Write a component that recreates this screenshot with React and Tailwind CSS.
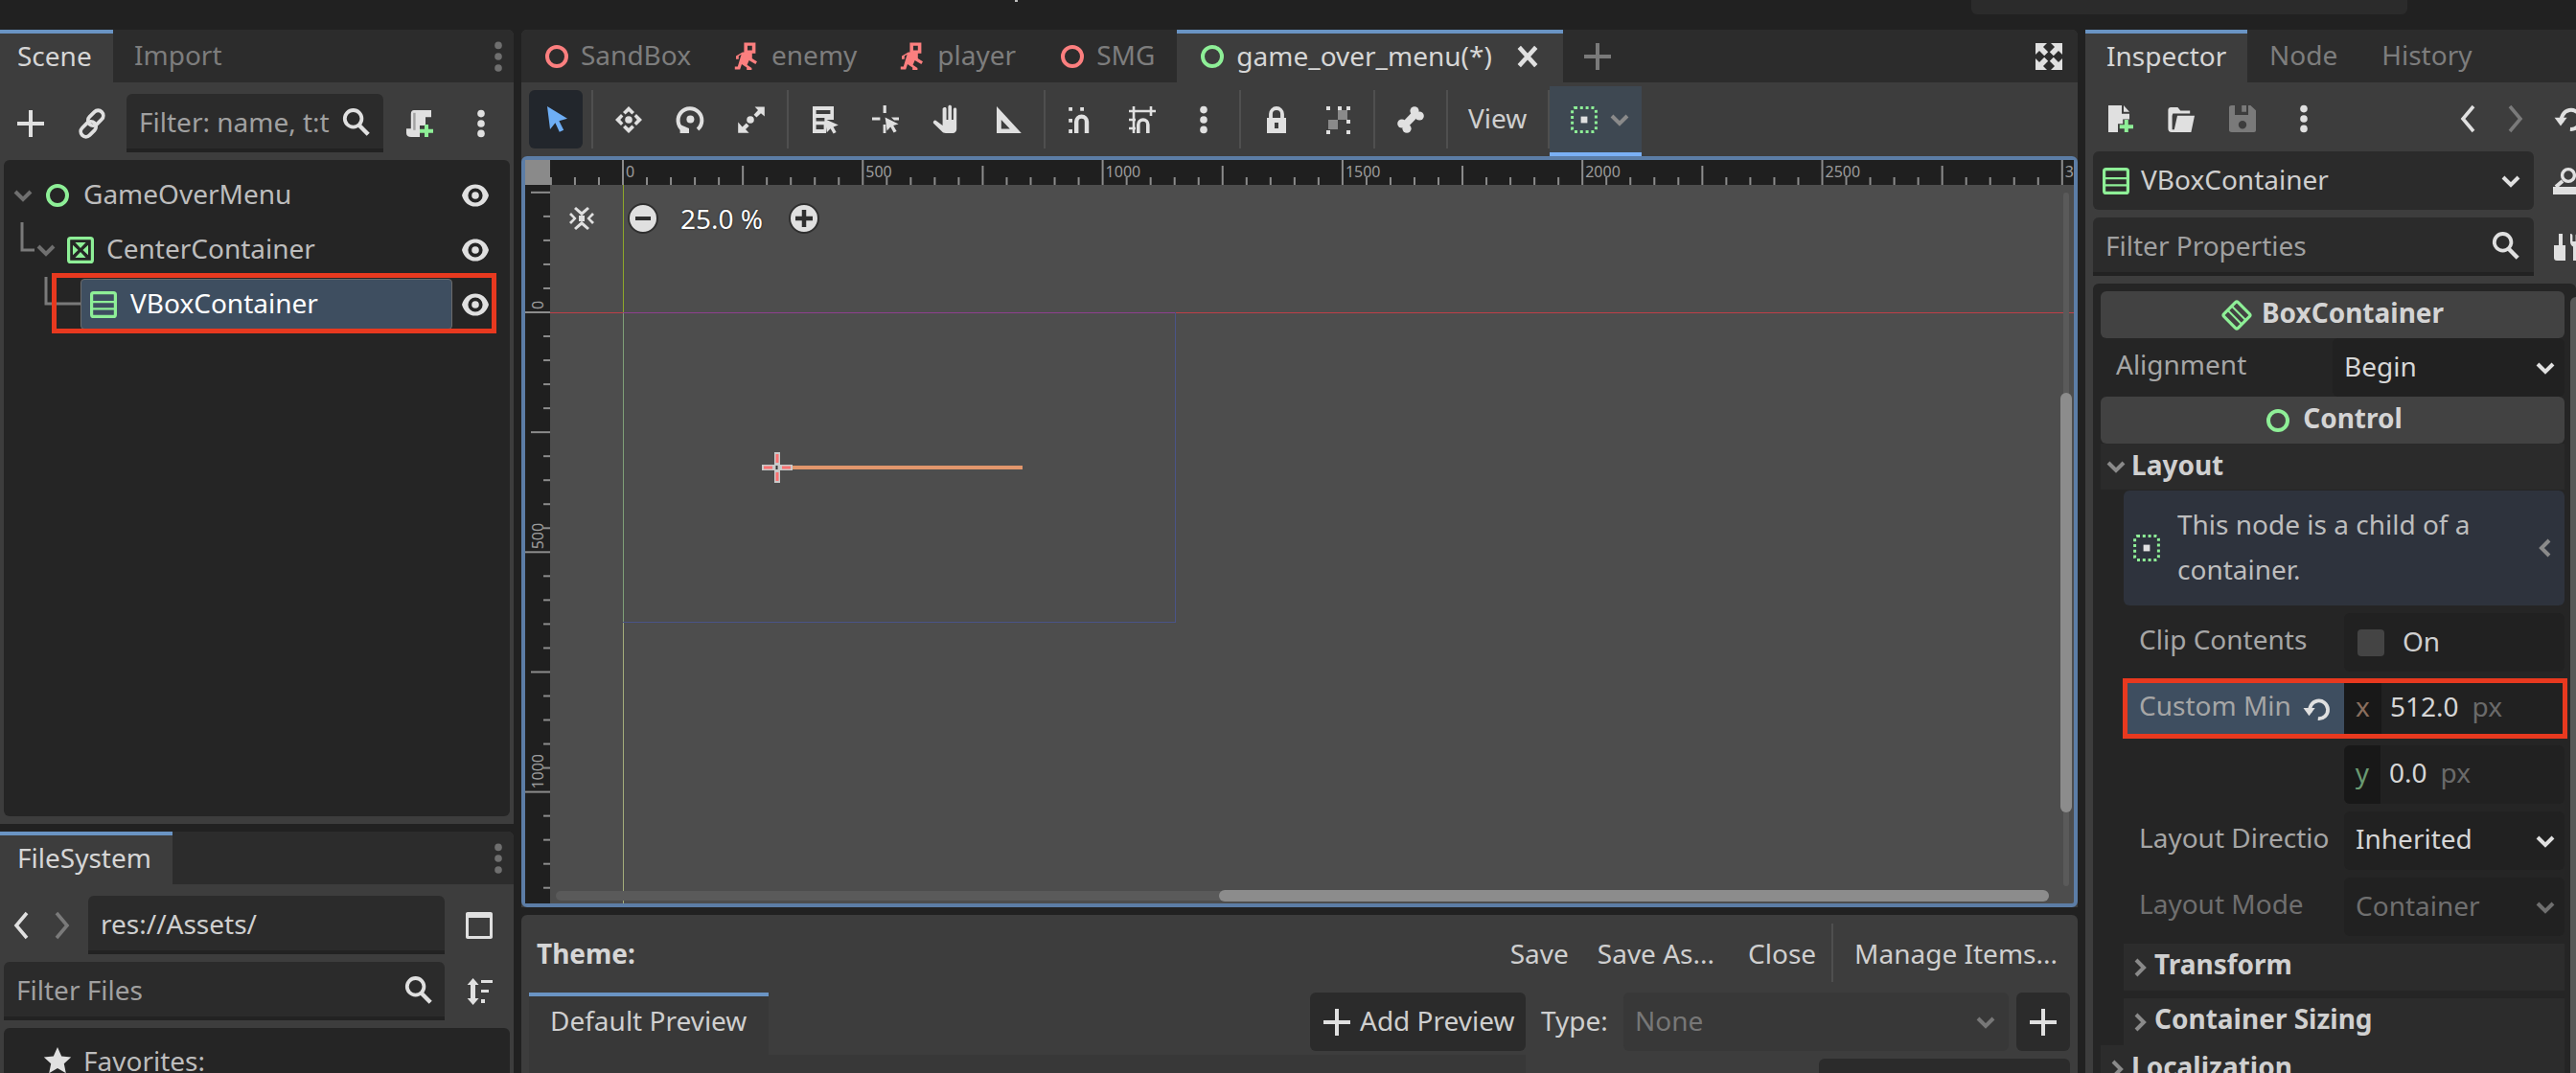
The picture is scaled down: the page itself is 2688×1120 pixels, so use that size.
import React from 'react';

const GREEN = '#8eef97';
const RED = '#fc7f7f';
const LIGHT = '#e0e0e0';

const Ico = ({ size = 32, className = '', children }) => (
  <svg viewBox="0 0 16 16" width={size} height={size} className={`shrink-0 ${className}`}>{children}</svg>
);

const Plus = ({ color = LIGHT }) => (
  <Ico><path d="M7 1h2v6h6v2H9v6H7V9H1V7h6z" fill={color} /></Ico>
);
const Dots = ({ color = LIGHT }) => (
  <Ico><g fill={color}><circle cx="8" cy="2.8" r="1.9" /><circle cx="8" cy="8" r="1.9" /><circle cx="8" cy="13.2" r="1.9" /></g></Ico>
);
const SmallDots = () => (
  <Ico><g fill="#6f6f6f"><circle cx="8" cy="2.2" r="1.9" /><circle cx="8" cy="8" r="1.9" /><circle cx="8" cy="14" r="1.9" /></g></Ico>
);
const Search = () => (
  <Ico><g fill="none" stroke={LIGHT}><circle cx="6.8" cy="6.4" r="4.4" strokeWidth="1.9" /><path d="M10 10l4.6 4.6" strokeWidth="2.2" /></g></Ico>
);
const Eye = () => (
  <Ico>
    <path fillRule="evenodd" fill={LIGHT} d="M8 2.2C4.6 2.2 2 4.4 1 8c1 3.6 3.6 5.8 7 5.8s6-2.2 7-5.8c-1-3.6-3.6-5.8-7-5.8zM8 4.2a3.8 3.8 0 1 1 0 7.6 3.8 3.8 0 0 1 0-7.6z" />
    <circle cx="8" cy="8" r="1.9" fill={LIGHT} />
  </Ico>
);
const Ring = ({ color = GREEN, size = 32 }) => (
  <Ico size={size}><circle cx="8" cy="8" r="5" fill="none" stroke={color} strokeWidth="2" /></Ico>
);
const VBox = () => (
  <Ico>
    <rect x="1.8" y="1.8" width="12.4" height="12.4" rx="1" fill="none" stroke={GREEN} strokeWidth="1.6" />
    <path d="M2 6h12v1.1H2zM2 9.6h12v1.1H2z" fill={GREEN} />
  </Ico>
);
const CenterBox = () => (
  <Ico>
    <rect x="1.8" y="1.8" width="12.4" height="12.4" rx="1" fill="none" stroke={GREEN} strokeWidth="1.6" />
    <path d="M5.2 4h5.6L8 7zM5.2 12h5.6L8 9zM4 5.4v5.2L6.8 8zM12 5.4v5.2L9.2 8z" fill={GREEN} />
  </Ico>
);
const Chevron = ({ color = '#8a8a8a', size = 24, dir = 'down' }) => (
  <svg viewBox="0 0 12 12" width={size} height={size} className="shrink-0">
    <path d={dir === 'down' ? 'M2 4l4 4 4-4' : dir === 'right' ? 'M4 2l4 4-4 4' : 'M8 2L4 6l4 4'} fill="none" stroke={color} strokeWidth="2" />
  </svg>
);
const Angle = ({ dir = 'left', color = LIGHT }) => (
  <Ico>
    <path d={dir === 'left' ? 'M10.5 1.5L5 8l5.5 6.5' : 'M5.5 1.5L11 8l-5.5 6.5'} fill="none" stroke={color} strokeWidth="1.8" />
  </Ico>
);
const Runner = () => (
  <Ico>
    <path fillRule="evenodd" fill={RED} d="M6.2 0.8h6v5.6h-1.8v2.6l2.6 1.6-.8 1.4-3.4-2-1 2.4 2.4 1.6V15H7.6v-1.2L5 12l-.9 2.8H1.4v-1.5h1.5l1.9-6.4-1.4.8v1.7H2V7.8l3.4-2h.8zM8 2.4v2.4h2.4V2.4z" />
  </Ico>
);
const Cross = ({ color = LIGHT }) => (
  <Ico size={28}><path d="M3 2.5L13 13.5M13 2.5L3 13.5" stroke={color} strokeWidth="2.6" fill="none" /></Ico>
);
const LinkIco = () => (
  <Ico>
    <g fill="none" stroke={LIGHT} strokeWidth="1.9">
      <rect x="7.2" y="0.6" width="5.4" height="9" rx="2.7" transform="rotate(45 9.9 5.1)" />
      <rect x="3.4" y="6.4" width="5.4" height="9" rx="2.7" transform="rotate(45 6.1 10.9)" />
    </g>
  </Ico>
);
const ScriptAdd = () => (
  <Ico>
    <path fill={LIGHT} d="M5 1h9v3.6h-3V9H8v6H3.5C2 15 1 14.2 1 13v-2.4h2.4V3C3.4 1.8 4 1 5 1z" />
    <path fill="#2f2f2f" d="M4.6 2.4h1.2v9H4.6z" opacity=".35" />
    <path fill={GREEN} d="M10.5 8.5h2v2.4H15v2h-2.5V15h-2v-2.1H8v-2h2.5z" />
  </Ico>
);
const NewFile = () => (
  <Ico>
    <path fill={LIGHT} d="M2 1h7v4.4h4V8.2H9.6v2.4H7V15H2zM10 1l3 3.4h-3z" />
    <path fill={GREEN} d="M10.4 8.5h2v2.6H15v2h-2.6V15h-2v-1.9H7.9v-2h2.5z" />
  </Ico>
);
const OpenFolder = () => (
  <Ico>
    <path fill={LIGHT} d="M2.6 2h3.6l1.4 1.8h5v1.4h-9C3.8 5.2 3.4 5.8 3.3 6.6v7H4.4L6 6.4h9L13.2 15H3C1.8 15 1.2 14.2 1.2 13V3.4C1.2 2.6 1.8 2 2.6 2z" />
  </Ico>
);
const SaveIco = () => (
  <Ico>
    <path fillRule="evenodd" fill="#7a7a7a" d="M2.4 1H4v5h7V1h1.2L15 3.6V14c0 .6-.4 1-1 1H2.4c-.8 0-1.4-.4-1.4-1V2c0-.6.6-1 1.4-1zM8 9a2.1 2.1 0 1 0 0 4.2A2.1 2.1 0 0 0 8 9zM7.6 1H10v3.4H7.6z" />
  </Ico>
);
const Reload = ({ color = LIGHT, size = 32 }) => (
  <Ico size={size}>
    <path d="M4.4 9.5A5 5 0 1 1 8 13.5" fill="none" stroke={color} strokeWidth="2" transform="rotate(-10 8 8)" />
    <path d="M0.8 7.4h6.5L4 11.8z" fill={color} />
  </Ico>
);
const DottedBox = ({ size = 32 }) => (
  <Ico size={size}>
    <rect x="1.8" y="1.8" width="12.4" height="12.4" rx="1.2" fill="none" stroke={GREEN} strokeWidth="1.5" strokeDasharray="1.5 1.4" />
    <rect x="6.3" y="6.3" width="3.4" height="3.4" fill={LIGHT} />
  </Ico>
);

// canvas toolbar drawings
const toolIcons = {
  select: <path fill="#6eaef5" d="M3.5 1L14 7.4l-4.3 1.2 2.4 4.8-2.2 1-2.2-4.8L5 13z" />,
  move: (
    <g fill={LIGHT}>
      <path d="M8 1l3 3-1.3 1.2L8 3.6 6.3 5.2 5 4zM8 15l3-3-1.3-1.2L8 12.4l-1.7-1.6L5 12zM1 8l3-3 1.2 1.3L3.6 8l1.6 1.7L4 11zM15 8l-3-3-1.2 1.3L12.4 8l-1.6 1.7L12 11z" />
      <circle cx="8" cy="8" r="1.9" />
    </g>
  ),
  rotate: (
    <g>
      <path d="M4.2 13.2A6.2 6.2 0 1 1 12 13" fill="none" stroke={LIGHT} strokeWidth="2" strokeLinecap="butt" />
      <path d="M2.8 15V10.5L7.5 12.5V15z" fill={LIGHT} />
      <circle cx="8.2" cy="7.8" r="2" fill={LIGHT} />
    </g>
  ),
  scale: (
    <g fill={LIGHT}>
      <path d="M9.8 1.2h5.1v5.1L13 4.600l-2.300 2.200-1.400-1.400L11.500 3z" />
      <path d="M1.100 9.200V14.900h5.700L5 13l1.800-1.700-1.400-1.500L3.300 11.800z" />
      <circle cx="7.500" cy="8" r="1.900" />
    </g>
  ),
  list: (
    <g fill={LIGHT}>
      <path fillRule="evenodd" d="M2 1h11v7H9v7H2zM3.800 3v2h7.400V3zM3.800 7v1.800h4.400V7zM3.800 10.600v2.400h4v-2.400z" />
      <path d="M8.400 7.600l7 3.200-2.600 1 1.500 2.700-1.500.8-1.500-2.700-1.900 2z" />
    </g>
  ),
  pivot: (
    <g fill={LIGHT}>
      <path d="M6.800 0.500h1.600v4H6.800zM1 6.800h4.200v1.500H1zM6.800 10.500h1.400V15H6.800zM11 6.800h4v1.500h-2.500z" />
      <path d="M7.800 6.800l7 3.400-2.700.8 1.700 3-1.500.8-1.700-3-1.800 2z" />
    </g>
  ),
  pan: <path fill={LIGHT} d="M7 1.500c.5 0 .8.3.8.8V8h.9V1.200c0-.5.4-.8.9-.8s.9.300.9.800V8h.9V2.500c0-.5.4-.8.9-.8s.8.300.8.800V13c0 1.100-.9 2-2 2H7.500c-1 0-1.700-.4-2.300-1.100L1.200 10c-.4-.4-.4-1 0-1.400s1-.4 1.400 0l3.200 2.400V2.300c0-.5.700-.8 1.200-.8z" />,
  ruler: <path fillRule="evenodd" fill={LIGHT} d="M2 1l12.900 14H2zM4.400 8v4.700h4.500z" />,
  snap: (
    <g fill={LIGHT}>
      <path d="M4.500 15V9a3.800 3.800 0 0 1 7.600 0v6h-2.200V9a1.600 1.600 0 0 0-3.200 0v6z" />
      <path d="M1.600 1.500h1.900v1.900H1.600zM7.600 1.500h1.900v1.900H7.600zM1.600 7.500h1.900v1.900H1.600zM1.600 13h1.900v2H1.600z" />
    </g>
  ),
  grid: (
    <g>
      <path d="M3.500 1v14M12.500 1v5M1 3.500h14M1 8h3.500M1 12.500h3.500" stroke={LIGHT} strokeWidth="1.300" />
      <path d="M5 15V10.500a3.400 3.400 0 0 1 6.800 0V15H10v-4.500a1.300 1.300 0 0 0-3.200 0V15z" fill={LIGHT} />
    </g>
  ),
  lock: (
    <g>
      <path fillRule="evenodd" fill={LIGHT} d="M3 7h10v8H3zM7 9.500V12.500h2V9.500z" />
      <path d="M5 7.500V5a3 3 0 0 1 6 0v2.500" fill="none" stroke={LIGHT} strokeWidth="1.900" />
    </g>
  ),
  group: (
    <g>
      <path d="M8 3h5v5H8v5H3V8h5z" fill="#8a8a8a" />
      <path d="M2 1h2v2H2zM8 1h2v2H8zM12.500 1h2v2h-2zM2 13.500h2v2H2zM12.500 13.500h2v2h-2zM12.500 8h2v2h-2z" fill={LIGHT} />
    </g>
  ),
  bone: (
    <g fill={LIGHT}>
      <path d="M10.500 5L5 10.700" stroke={LIGHT} strokeWidth="3.800" />
      <circle cx="10" cy="3.400" r="2.300" />
      <circle cx="12.600" cy="6" r="2.300" />
      <circle cx="3.400" cy="10" r="2.300" />
      <circle cx="6" cy="12.600" r="2.300" />
    </g>
  ),
};

const ToolBtn = ({ icon }) => (
  <div className="flex h-[61px] w-[64px] items-center justify-center"><Ico>{toolIcons[icon]}</Ico></div>
);
const ToolSep = () => (
  <div className="flex h-[61px] w-[12px] justify-center"><div className="h-full w-[2px] bg-[#4f4f4f]" /></div>
);

const SceneTab = ({ icon, label }) => (
  <div className="flex h-full items-center pl-[21px] pr-[22px] text-[#7d7d7d]">
    {icon}
    <span className="ml-[9px] pb-[3px]">{label}</span>
  </div>
);

const DockTab = ({ label, active, className = '' }) => (
  <div className={`flex h-full items-center ${className} ${active ? 'border-t-4 border-[#6a94c4] bg-[#3d3d3d] pb-[6px] text-[#d6d6d6]' : 'pb-[3px] text-[#7d7d7d]'}`}>
    {label}
  </div>
);

const InputBox = ({ className = '', children }) => (
  <div className={`flex h-[61px] items-center rounded-t-[6px] border-b-4 border-[#222222] bg-[#2b2b2b] ${className}`}>{children}</div>
);

const Ruler = ({ vertical }) => {
  const ticks = [];
  if (vertical) {
    for (let i = -5; i <= 24; i++) {
      const y = 133 + i * 25.03;
      const len = i % 10 === 0 ? 26 : i % 5 === 0 ? 20 : 7;
      ticks.push(<rect key={i} x={26 - len} y={y - 1} width={len} height="2" fill="#8c8c8c" />);
      if (i % 10 === 0) {
        const v = i * 50;
        ticks.push(
          <text key={`t${i}`} x="19" y={y - 3} fontSize="16" fill="#9c9c9c" fontFamily="Noto Sans" transform={`rotate(-90 19 ${y - 3})`}>{v}</text>
        );
      }
    }
    return <svg width="26" height="750" className="shrink-0">{ticks}</svg>;
  }
  for (let i = -3; i <= 60; i++) {
    const x = 76 + i * 25.03;
    const len = i % 10 === 0 ? 26 : i % 5 === 0 ? 20 : 8;
    ticks.push(<rect key={i} x={x - 1} y={26 - len} width="2" height={len} fill="#8c8c8c" />);
    if (i % 10 === 0) {
      ticks.push(<text key={`t${i}`} x={x + 3} y="18" fontSize="16" fill="#9c9c9c" fontFamily="Noto Sans">{i * 50}</text>);
    }
  }
  return <svg width="1590" height="26" className="shrink-0">{ticks}</svg>;
};

const PropRow = ({ label, dim, children }) => (
  <div className="ml-[24px] mt-[8px] flex h-[61px]">
    <div className={`flex w-[230px] items-center pb-[8px] pl-[16px] ${dim ? 'text-[#6f6f6f]' : 'text-[#a6a6a6]'}`}>{label}</div>
    {children}
  </div>
);
const ValueBox = ({ className = '', children }) => (
  <div className={`flex h-full w-[230px] items-center rounded-[6px] bg-[#212121] ${className}`}>{children}</div>
);
const Section = ({ label }) => (
  <div className="ml-[24px] mt-[8px] flex h-[49px] items-center bg-[#2c2c2c] pl-[5px] font-bold text-[#d0d0d0]">
    <Chevron dir="right" size={24} />
    <span className="ml-[3px] pb-[7px]">{label}</span>
  </div>
);
const ClassHeader = ({ icon, label }) => (
  <div className="flex h-[49px] items-center justify-center rounded-[6px] bg-[#424242] font-bold text-[#d4d4d4]">
    {icon}
    <span className="ml-[10px] pb-[5px]">{label}</span>
  </div>
);

export default function App() {
  return (
    <div className="flex h-[1120px] w-[2688px] flex-col overflow-hidden bg-[#212121] font-['Noto_Sans',sans-serif] text-[28px] leading-none text-[#cfcfcf]">
      {/* top bar */}
      <div className="flex h-[31px] shrink-0 items-start">
        <div className="ml-[1059px] h-[2px] w-[3px] bg-[#bdbdbd]" />
        <div className="ml-[995px] h-[15px] w-[455px] rounded-b-[6px] bg-[#2b2b2b]" />
      </div>

      <div className="flex min-h-0 flex-1 gap-[8px]">
        {/* left docks */}
        <div className="flex w-[536px] shrink-0 flex-col gap-[8px]">
          <div className="flex h-[829px] flex-col rounded-tr-[6px] bg-[#3d3d3d]">
            <div className="flex h-[55px] shrink-0 items-center justify-between rounded-tr-[6px] bg-[#2c2c2c]">
              <div className="flex h-full items-center">
                <DockTab label="Scene" active className="w-[118px] pl-[18px]" />
                <DockTab label="Import" className="pl-[22px]" />
              </div>
              <SmallDots />
            </div>
            <div className="box-content flex h-[61px] shrink-0 items-center pt-[12px]">
              <div className="flex w-[64px] justify-center"><Plus /></div>
              <div className="flex w-[64px] justify-center"><LinkIco /></div>
              <InputBox className="ml-[4px] w-[268px] pl-[13px] pr-[13px] text-[#a0a0a0]">
                <span className="flex-1 whitespace-nowrap">Filter: name, t:t</span>
                <Search />
              </InputBox>
              <div className="ml-[6px] flex w-[64px] justify-center"><ScriptAdd /></div>
              <div className="flex w-[64px] justify-center"><Dots /></div>
            </div>
            <div className="relative mx-[4px] mb-[8px] mt-[8px] min-h-0 flex-1 rounded-[6px] bg-[#252525] pt-[8px]">
              <div className="flex h-[57px] items-center">
                <div className="ml-[8px] flex w-[24px] justify-center"><Chevron color="#6f6f6f" /></div>
                <div className="ml-[8px]"><Ring /></div>
                <span className="ml-[11px] pb-[3px] text-[#bdbdbd]">GameOverMenu</span>
              </div>
              <div className="flex h-[57px] items-center">
                <svg width="15" height="57" className="ml-[17px] shrink-0">
                  <path d="M2 0v29h13" fill="none" stroke="#7a7a7a" strokeWidth="3" />
                </svg>
                <Chevron color="#6f6f6f" />
                <div className="ml-[8px]"><CenterBox /></div>
                <span className="ml-[11px] pb-[3px] text-[#bdbdbd]">CenterContainer</span>
              </div>
              <div className="flex h-[57px] items-center">
                <svg width="46" height="57" className="ml-[42px] shrink-0">
                  <path d="M2 0v28h38" fill="none" stroke="#7a7a7a" strokeWidth="3" />
                </svg>
                <div className="-ml-[8px] flex h-[53px] w-[388px] items-center rounded-[4px] border border-[#6b6b6b] bg-[#3e4e60] pl-[7px] text-white">
                  <VBox />
                  <span className="ml-[12px] pb-[3px]">VBoxContainer</span>
                </div>
              </div>
              {/* visibility toggles */}
              <div className="absolute left-[476px] top-[8px] flex flex-col">
                {[0, 1, 2].map((i) => (
                  <div key={i} className="flex h-[57px] items-center"><Eye /></div>
                ))}
              </div>
              {/* red annotation box */}
              <div className="absolute left-[50px] top-[118px] h-[63px] w-[464px] border-[5px] border-[#e8391f]" />
            </div>
          </div>

          <div className="flex min-h-0 flex-1 flex-col rounded-tr-[6px] bg-[#3d3d3d]">
            <div className="flex h-[55px] shrink-0 items-center justify-between rounded-tr-[6px] bg-[#2c2c2c]">
              <DockTab label="FileSystem" active className="w-[180px] pl-[18px]" />
              <SmallDots />
            </div>
            <div className="mt-[12px] flex h-[61px] shrink-0 items-center">
              <div className="flex w-[46px] justify-center"><Angle dir="left" /></div>
              <div className="flex w-[36px] justify-center"><Angle dir="right" color="#7a7a7a" /></div>
              <InputBox className="ml-[10px] w-[372px] pl-[13px]">res://Assets/</InputBox>
              <div className="ml-[20px] flex w-[32px] justify-center">
                <Ico>
                  <path fillRule="evenodd" fill={LIGHT} d="M2 1h12c.6 0 1 .4 1 1v12c0 .6-.4 1-1 1H2c-.6 0-1-.4-1-1V2c0-.6.4-1 1-1zM2.500 4v9.500h11V4z" />
                </Ico>
              </div>
            </div>
            <div className="mt-[8px] flex h-[61px] shrink-0 items-center pl-[4px]">
              <InputBox className="w-[460px] pl-[13px] pr-[12px] text-[#a0a0a0]">
                <span className="flex-1">Filter Files</span>
                <Search />
              </InputBox>
              <div className="ml-[20px] flex w-[32px] justify-center">
                <Ico>
                  <g fill={LIGHT}>
                    <path d="M4.800 1l3 3.500H6v7h1.800L4.800 15l-3-3.500h1.700v-7H1.800z" />
                    <path d="M9 2h6v1.500H9zM9 7h4v1.500H9zM9 12h2v2H9z" />
                  </g>
                </Ico>
              </div>
            </div>
            <div className="mx-[4px] mt-[8px] min-h-0 flex-1 rounded-t-[6px] bg-[#252525]">
              <div className="box-content flex h-[60px] items-center pl-[40px] pt-[4px] text-[#bdbdbd]">
                <Ico><path fill={LIGHT} d="M8 1l2.100 4.700 5 .5-3.700 3.400 1 5-4.400-2.600-4.400 2.600 1-5L.9 6.200l5-.5z" /></Ico>
                <span className="ml-[11px]">Favorites:</span>
              </div>
            </div>
          </div>
        </div>

        {/* center column */}
        <div className="flex w-[1624px] shrink-0 flex-col gap-[8px]">
          <div className="flex h-[916px] flex-col rounded-t-[6px] bg-[#3d3d3d]">
            <div className="flex h-[55px] shrink-0 items-center rounded-t-[6px] bg-[#2c2c2c]">
              <SceneTab icon={<Ring color={RED} />} label="SandBox" />
              <SceneTab icon={<Runner />} label="enemy" />
              <SceneTab icon={<Runner />} label="player" />
              <SceneTab icon={<Ring color={RED} />} label="SMG" />
              <div className="ml-[1px] flex h-full w-[403px] items-center border-t-4 border-[#6a94c4] bg-[#3d3d3d] pb-[4px] pl-[21px] text-[#d6d6d6]">
                <Ring />
                <span className="ml-[9px] whitespace-nowrap pb-[2px]">game_over_menu(*)</span>
                <div className="ml-[23px]"><Cross /></div>
              </div>
              <div className="ml-[20px]"><Plus color="#7a7a7a" /></div>
              <div className="ml-auto mr-[14px]">
                <Ico>
                  <path fill={LIGHT} d="M1 1h6L5 3l2.600 2.600L5.600 7.600 3 5 1 7zM15 1H9l2 2-2.600 2.600 2 2L13 5l2 2zM1 15h6l-2-2 2.600-2.600-2-2L3 11l-2-2zM15 15H9l2-2-2.600-2.600 2-2L13 11l2-2z" />
                </Ico>
              </div>
            </div>

            <div className="flex h-[77px] shrink-0 items-start pl-[4px] pt-[8px]">
              <div className="flex h-[61px] w-[64px] items-center justify-center">
                <div className="flex h-[61px] w-[56px] items-center justify-center rounded-[6px] bg-[#22262c]">
                  <Ico>{toolIcons.select}</Ico>
                </div>
              </div>
              <ToolSep />
              <ToolBtn icon="move" /><ToolBtn icon="rotate" /><ToolBtn icon="scale" />
              <ToolSep />
              <ToolBtn icon="list" /><ToolBtn icon="pivot" /><ToolBtn icon="pan" /><ToolBtn icon="ruler" />
              <ToolSep />
              <ToolBtn icon="snap" /><ToolBtn icon="grid" />
              <div className="flex h-[61px] w-[64px] items-center justify-center"><Dots /></div>
              <ToolSep />
              <ToolBtn icon="lock" /><ToolBtn icon="group" />
              <ToolSep />
              <ToolBtn icon="bone" />
              <ToolSep />
              <div className="flex h-[61px] w-[99px] items-center pb-[4px] pl-[16px] text-[#cfcfcf]">View</div>
              <div className="h-[61px] w-[2px] bg-[#4f4f4f]" />
              <div className="-mt-[4px] flex h-[73px] w-[96px] items-center border-b-4 border-[#7ab0f5] bg-[#3e4852] pl-[20px]">
                <DottedBox />
                <div className="ml-[9px]"><Chevron size={24} /></div>
              </div>
            </div>

            {/* viewport */}
            <div className="flex min-h-0 flex-1 flex-col rounded-[6px] border-4 border-[#5c7da6] bg-[#4d4d4d]">
              <div className="flex h-[26px] shrink-0 overflow-hidden bg-[#1f1f1f]">
                <div className="h-[26px] w-[26px] shrink-0 bg-[#8a8a8a]" />
                <Ruler />
              </div>
              <div className="flex min-h-0 flex-1">
                <div className="w-[26px] shrink-0 overflow-hidden bg-[#1f1f1f]"><Ruler vertical /></div>
                <div className="relative min-w-0 flex-1 overflow-hidden">
                  <div className="absolute left-0 right-0 top-[133px] h-[1px] bg-[#bf3f48]" />
                  <div className="absolute left-[76px] top-0 h-[133px] w-[1px] bg-[#8ea82a]" />
                  <div className="absolute left-[76px] top-[133px] h-[324px] w-[1px] bg-[#7f9f77]" />
                  <div className="absolute bottom-0 left-[76px] top-[457px] w-[1px] bg-[#a3ad7a]" />
                  <div className="absolute left-[76px] top-[133px] h-[1px] w-[576px] bg-[#8f3f8f]" />
                  <div className="absolute left-[76px] top-[133px] h-[324px] w-[577px] border-b border-r border-[#4a5488]" />

                  {/* zoom widget */}
                  <div className="absolute left-[17px] top-[19px] flex items-center">
                    <Ico>
                      <path fill={LIGHT} d="M5 2l3 2.500L11 2l1 1-4 3.600L4 3zM2.500 5l2.800 3-2.800 3-1-1L3.600 8 1.500 6zM13.500 5l1 1-2.100 2 2.100 2-1 1-2.800-3zM5 14l3-2.500 3 2.500 1-1-4-3.600L4 13zM6.500 6.500h3v3h-3z" />
                    </Ico>
                    <div className="ml-[32px] flex h-[32px] w-[32px] items-center justify-center rounded-full border-2 border-[#2f2f2f] bg-[#e0e0e0]">
                      <div className="h-[4px] w-[16px] bg-[#2f2f2f]" />
                    </div>
                    <span className="ml-[23px] w-[101px] text-white [text-shadow:0_0_2px_#000]">25.0 %</span>
                    <div className="ml-[12px] flex h-[32px] w-[32px] items-center justify-center rounded-full border-2 border-[#2f2f2f] bg-[#e0e0e0]">
                      <svg viewBox="0 0 16 16" width="18" height="18"><path d="M6 0h4v6h6v4h-6v6H6v-6H0V6h6z" fill="#2f2f2f" /></svg>
                    </div>
                  </div>

                  {/* selected node */}
                  <div className="absolute left-[252px] top-[293px] h-[4px] w-[241px] bg-[#e2966c]" />
                  <svg className="absolute left-[221px] top-[279px]" width="32" height="32">
                    <path d="M13 0h6v13h13v6H19v13h-6V19H0v-6h13z" fill="#c9c9c9" />
                    <path d="M14.500 2h3v9h-3zM14.500 21h3v9h-3zM2 14.500h9v3H2zM21 14.500h9v3h-9z" fill="#f97070" />
                    <rect x="14.500" y="14" width="2" height="4" fill="#333" />
                  </svg>

                  {/* scrollbars */}
                  <div className="absolute bottom-[18px] right-[5px] top-[8px] w-[6px] rounded-full bg-[#5a5a5a]" />
                  <div className="absolute right-[2px] top-[217px] h-[438px] w-[12px] rounded-full bg-[#8c8c8c]" />
                  <div className="absolute bottom-[3px] left-[6px] right-[26px] h-[10px] rounded-full bg-[#5a5a5a]" />
                  <div className="absolute bottom-[2px] right-[26px] h-[12px] w-[866px] rounded-full bg-[#8c8c8c]" />
                </div>
              </div>
            </div>
          </div>

          {/* theme editor */}
          <div className="flex min-h-0 flex-1 flex-col rounded-t-[6px] bg-[#3d3d3d]">
            <div className="flex h-[81px] shrink-0 items-center pb-[2px] pl-[16px] pr-[21px]">
              <span className="font-bold text-[#d6d6d6]">Theme:</span>
              <span className="ml-auto">Save</span>
              <span className="ml-[30px]">Save As...</span>
              <span className="ml-[35px]">Close</span>
              <div className="ml-[16px] mr-[22px] h-[61px] w-[2px] bg-[#4f4f4f]" />
              <span>Manage Items...</span>
            </div>
            <div className="flex h-[65px] shrink-0 items-start pl-[8px]">
              <div className="flex h-[65px] w-[250px] items-center whitespace-nowrap border-t-4 border-[#6a94c4] bg-[#383838] pb-[12px] pl-[22px]">Default Preview</div>
              <div className="ml-[565px] flex h-[61px] w-[225px] items-center rounded-[6px] bg-[#2b2b2b] pl-[14px] pr-[4px]">
                <div className="-ml-[2px]"><Plus /></div>
                <span className="ml-[8px] whitespace-nowrap pb-[4px]">Add Preview</span>
              </div>
              <div className="ml-[16px] flex h-[61px] w-[86px] items-center pb-[3px]">Type:</div>
              <div className="flex h-[61px] w-[402px] items-center justify-between rounded-[6px] bg-[#383838] pl-[12px] pr-[12px] text-[#777777]">
                <span className="pb-[3px]">None</span>
                <Chevron color="#777777" />
              </div>
              <div className="ml-[8px] flex h-[61px] w-[56px] items-center justify-center rounded-[6px] bg-[#2b2b2b]"><Plus /></div>
            </div>
            <div className="flex min-h-0 flex-1 pl-[8px]">
              <div className="w-[1040px] bg-[#383838]" />
              <div className="ml-[306px] mr-[8px] mt-[4px] flex-1 rounded-t-[6px] bg-[#2b2b2b]" />
            </div>
          </div>
        </div>

        {/* inspector */}
        <div className="flex min-w-0 flex-1 flex-col overflow-hidden bg-[#3d3d3d]">
          <div className="flex h-[55px] shrink-0 items-center bg-[#2c2c2c]">
            <DockTab label="Inspector" active className="w-[169px] pl-[22px]" />
            <DockTab label="Node" className="pl-[23px]" />
            <DockTab label="History" className="pl-[46px]" />
          </div>
          <div className="flex h-[72px] shrink-0 items-center pl-[20px] pt-[4px]">
            <NewFile />
            <div className="ml-[32px]"><OpenFolder /></div>
            <div className="ml-[32px]"><SaveIco /></div>
            <div className="ml-[32px]"><Dots /></div>
            <div className="ml-[140px]"><Angle dir="left" /></div>
            <div className="ml-[16px]"><Angle dir="right" color="#7a7a7a" /></div>
            <div className="ml-[24px]"><Reload /></div>
          </div>
          <div className="flex h-[61px] shrink-0 items-center pl-[8px]">
            <div className="flex h-full w-[460px] shrink-0 items-center rounded-[6px] bg-[#2b2b2b] pl-[8px] pr-[12px]">
              <VBox />
              <span className="ml-[10px] flex-1 pb-[3px]">VBoxContainer</span>
              <Chevron color={LIGHT} />
            </div>
            <div className="ml-[20px] shrink-0">
              <Ico>
                <circle cx="8" cy="5" r="3.200" fill="none" stroke={LIGHT} strokeWidth="1.700" />
                <path d="M5 8l-3.500 3" stroke={LIGHT} strokeWidth="2" />
                <path d="M0 11h16v4H0z" fill={LIGHT} />
              </Ico>
            </div>
          </div>
          <div className="mt-[8px] flex h-[61px] shrink-0 items-center pl-[8px]">
            <InputBox className="w-[460px] shrink-0 pl-[13px] pr-[14px] text-[#a0a0a0]">
              <span className="flex-1">Filter Properties</span>
              <Search />
            </InputBox>
            <div className="ml-[20px] shrink-0">
              <Ico>
                <path fill={LIGHT} d="M3 1h2v6h1.500v8h-4.500c-1 0-1.500-.6-1.500-1.500V7H3zM9 1c1 0 1.200.4 1.200 1v3h1.600V1.400C14 2 15 3.600 15 5c0 1.300-.6 2.200-1.500 2.800V15h-3V7.800C9.300 7 9 6 9 5z" />
              </Ico>
            </div>
          </div>
          <div className="relative ml-[8px] mt-[8px] min-h-0 flex-1 rounded-t-[6px] bg-[#252525] pl-[8px] pr-[12px] pt-[8px]">
            <ClassHeader
              label="BoxContainer"
              icon={
                <Ico>
                  <g transform="rotate(45 8 8)">
                    <rect x="2.800" y="2.800" width="10.400" height="10.400" rx="1" fill="none" stroke={GREEN} strokeWidth="1.600" />
                    <path d="M3 6h10v1H3zM3 9h10v1H3z" fill={GREEN} />
                  </g>
                </Ico>
              }
            />
            <div className="flex h-[61px]">
              <div className="flex w-[242px] items-center pb-[8px] pl-[16px] text-[#a6a6a6]">Alignment</div>
              <ValueBox className="w-[242px] justify-between pl-[12px] pr-[8px]">
                <span className="pb-[4px] text-[#d6d6d6]">Begin</span>
                <Chevron color={LIGHT} />
              </ValueBox>
            </div>
            <ClassHeader label="Control" icon={<Ring />} />
            <div className="flex h-[48px] items-center bg-[#2b2b2b] pl-[4px] font-bold text-[#d0d0d0]">
              <Chevron color="#8a8a8a" />
              <span className="ml-[4px] pb-[5px]">Layout</span>
            </div>
            <div className="ml-[24px] mt-[1px] flex h-[120px] items-center rounded-[6px] bg-[#2e333d] pl-[8px] pr-[8px]">
              <DottedBox size={32} />
              <div className="ml-[16px] flex-1 pb-[2px] leading-[47px] text-[#bdbdbd]">This node is a child of a<br />container.</div>
              <Chevron dir="left" color="#8a8a8a" />
            </div>
            <PropRow label="Clip Contents">
              <ValueBox className="pl-[14px]">
                <div className="h-[28px] w-[28px] rounded-[4px] bg-[#444444]" />
                <span className="ml-[19px] pb-[3px] text-[#d0d0d0]">On</span>
              </ValueBox>
            </PropRow>
            <div className="relative ml-[24px] mt-[8px] flex h-[61px]">
              <div className="flex w-[230px] items-center justify-between bg-[#3e4e60] pl-[16px] pr-[14px] text-[#a6a6a6]">
                <span className="pb-[8px]">Custom Min</span>
                <Reload size={30} />
              </div>
              <ValueBox className="rounded-none">
                <div className="flex h-full w-[39px] items-center justify-center bg-[#181818] pb-[6px] text-[#8a6e5e]">x</div>
                <span className="ml-[9px] pb-[5px] text-[#d6d6d6]">512.0</span>
                <span className="ml-[14px] pb-[5px] text-[#6a6a6a]">px</span>
              </ValueBox>
              <div className="absolute -left-[1px] -top-[1px] h-[63px] w-[464px] border-[5px] border-[#e8391f]" />
            </div>
            <PropRow label="">
              <ValueBox>
                <div className="flex h-full w-[38px] items-center justify-center rounded-l-[6px] bg-[#181818] pb-[6px] text-[#6a9a72]">y</div>
                <span className="ml-[9px] pb-[6px] text-[#d6d6d6]">0.0</span>
                <span className="ml-[14px] pb-[6px] text-[#6a6a6a]">px</span>
              </ValueBox>
            </PropRow>
            <PropRow label="Layout Directio">
              <ValueBox className="justify-between pl-[12px] pr-[8px]">
                <span className="pb-[5px] text-[#d6d6d6]">Inherited</span>
                <Chevron color={LIGHT} />
              </ValueBox>
            </PropRow>
            <PropRow label="Layout Mode" dim>
              <ValueBox className="justify-between pl-[12px] pr-[8px] text-[#6f6f6f]">
                <span className="pb-[4px]">Container</span>
                <Chevron color="#6f6f6f" />
              </ValueBox>
            </PropRow>
            <Section label="Transform" />
            <Section label="Container Sizing" />
            <div className="flex h-[49px] items-center bg-[#2c2c2c] pl-[5px] font-bold text-[#d0d0d0]">
              <Chevron dir="right" />
              <span className="ml-[3px] pb-[5px]">Localization</span>
            </div>
            <div className="absolute right-0 top-[14px] h-full w-[6px] rounded-l-full bg-[#585858]" />
          </div>
        </div>
      </div>
    </div>
  );
}
